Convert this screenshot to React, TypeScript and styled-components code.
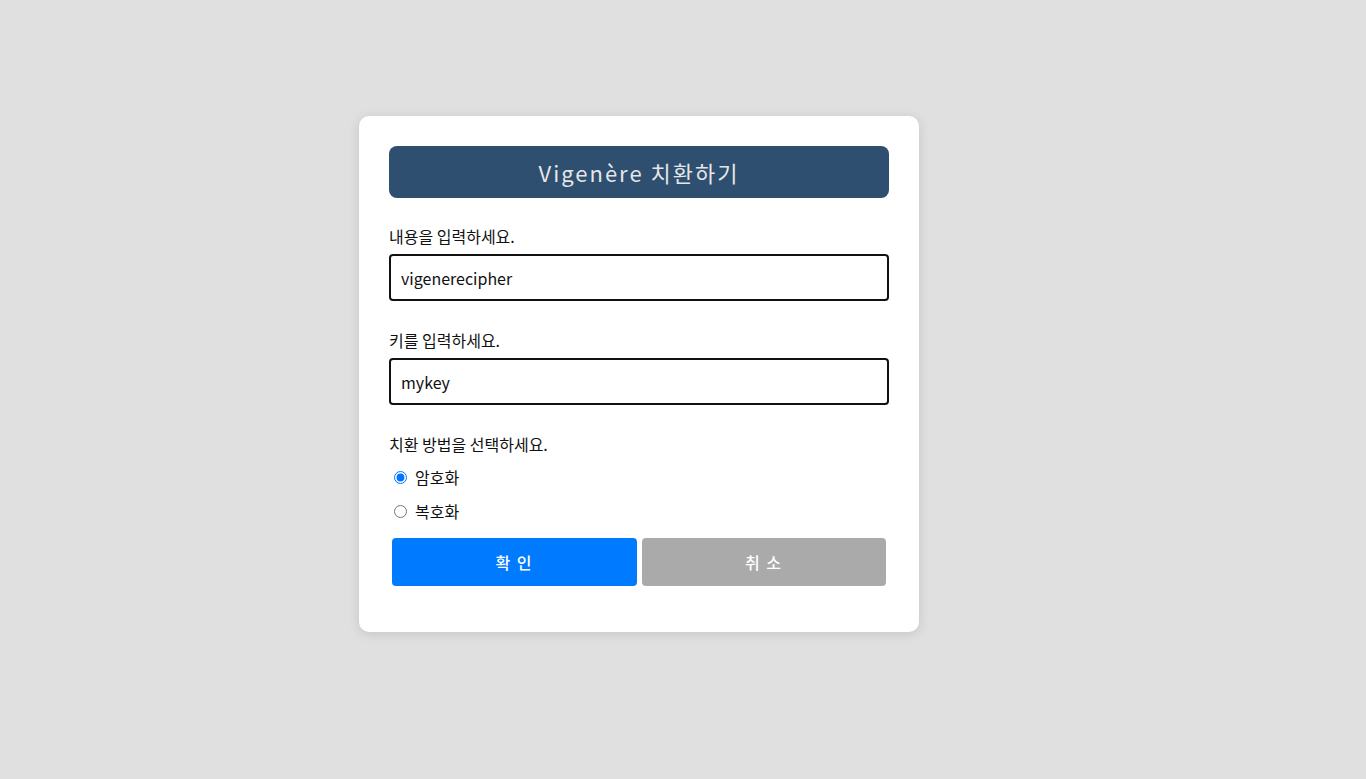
import React from "react";
import styled, { createGlobalStyle } from "styled-components";

const Global = createGlobalStyle`
  html, body { margin: 0; padding: 0; background: #e0e0e0; }
  body { font-family: "Noto Sans CJK KR", "Noto Sans", sans-serif; color: #111; }
`;

const Page = styled.div`
  min-height: 779px;
  box-sizing: border-box;
  padding: 116px 0 0 359px;
`;

const Card = styled.form`
  width: 560px;
  box-sizing: border-box;
  background: #fff;
  border-radius: 10px;
  padding: 30px 30px 46px;
  box-shadow: 0 2px 12px rgba(0, 0, 0, 0.12);
`;

const Title = styled.h1`
  margin: 0 0 26px;
  height: 52px;
  display: flex;
  align-items: center;
  justify-content: center;
  background: #2e4f70;
  color: #e6e6e6;
  border-radius: 8px;
  font-size: 22px;
  font-weight: 400;
  letter-spacing: 2px;
`;

const Field = styled.div`
  display: flex;
  flex-direction: column;
  margin-bottom: 27px;
`;

const Label = styled.label`
  display: block;
  font-size: 16px;
  line-height: 24px;
  margin-bottom: 6px;
`;

const MethodLabel = styled(Label)`
  margin-bottom: 9px;
`;

const Input = styled.input`
  height: 47px;
  box-sizing: border-box;
  border: 2px solid #111;
  border-radius: 4px;
  padding: 0 10px;
  font-family: inherit;
  font-size: 16px;
  color: #111;
  outline: none;
`;

const Options = styled.div`
  display: flex;
  flex-direction: column;
  gap: 10px;
`;

const RadioRow = styled.label`
  display: flex;
  align-items: center;
  height: 24px;
  font-size: 16px;
`;

const Radio = styled.input`
  margin: 0 8px 0 5px;
  width: 13px;
  height: 13px;
  accent-color: #0075ff;
`;

const Buttons = styled.div`
  display: flex;
  gap: 5px;
  padding: 0 3px;
  margin-top: 15px;
`;

const Button = styled.button<{ $tone: "primary" | "muted" }>`
  flex: 1;
  height: 48px;
  border: none;
  border-radius: 4px;
  background: ${(p) => (p.$tone === "primary" ? "#007bff" : "#aaaaaa")};
  color: #fff;
  font-family: inherit;
  font-size: 16px;
  font-weight: 500;
  letter-spacing: 1.5px;
  cursor: pointer;
`;

export default function App() {
  return (
    <>
      <Global />
      <Page>
        <Card onSubmit={(e) => e.preventDefault()}>
          <Title>Vigenère 치환하기</Title>
          <Field>
            <Label>내용을 입력하세요.</Label>
            <Input defaultValue="vigenerecipher" />
          </Field>
          <Field>
            <Label>키를 입력하세요.</Label>
            <Input defaultValue="mykey" />
          </Field>
          <MethodLabel>치환 방법을 선택하세요.</MethodLabel>
          <Options>
            <RadioRow>
              <Radio type="radio" name="mode" defaultChecked />
              암호화
            </RadioRow>
            <RadioRow>
              <Radio type="radio" name="mode" />
              복호화
            </RadioRow>
          </Options>
          <Buttons>
            <Button $tone="primary" type="submit">확 인</Button>
            <Button $tone="muted" type="button">취 소</Button>
          </Buttons>
        </Card>
      </Page>
    </>
  );
}
